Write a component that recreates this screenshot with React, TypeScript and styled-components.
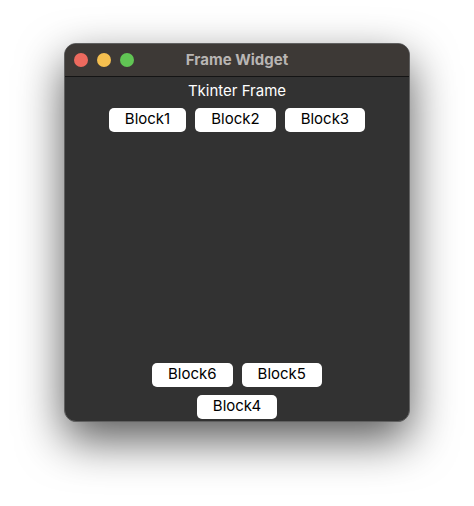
import React from 'react';
import styled, { createGlobalStyle } from 'styled-components';

const GlobalStyle = createGlobalStyle`
  * {
    box-sizing: border-box;
  }

  body {
    margin: 0;
    background: #fff;
    font-family: Inter, 'Liberation Sans', sans-serif;
  }
`;

const Desktop = styled.div`
  display: flex;
  min-height: 100vh;
  padding: 43px 64px 84px;
`;

const Window = styled.main`
  flex: 1;
  display: flex;
  flex-direction: column;
  overflow: hidden;
  background: #323232;
  border: 1px solid #606060;
  border-radius: 12px;
  box-shadow: 0 18px 46px rgba(0, 0, 0, 0.65);
`;

const TitleBar = styled.header`
  display: grid;
  grid-template-columns: 1fr auto 1fr;
  align-items: center;
  height: 33px;
  padding: 0 9px;
  background: #3d3936;
  border-bottom: 1px solid #141414;
`;

const Controls = styled.div`
  display: flex;
  gap: 9px;
`;

const ControlButton = styled.button<{ $color: string }>`
  width: 14px;
  height: 14px;
  padding: 0;
  border: none;
  border-radius: 50%;
  background: ${({ $color }) => $color};
`;

const Title = styled.h1`
  margin: 0;
  color: #b8b5b3;
  font-size: 15px;
  font-weight: 700;
  line-height: 20px;
`;

const Content = styled.div`
  flex: 1;
  display: flex;
  flex-direction: column;
  align-items: center;
  padding: 4px 0 2px;
`;

const Label = styled.p`
  margin: 0 0 7px;
  color: #fff;
  font-size: 15px;
  line-height: 20px;
`;

const ButtonRow = styled.div`
  display: flex;
  gap: 9px;
`;

const BottomFrame = styled.div`
  display: flex;
  flex-direction: column;
  align-items: center;
  gap: 8px;
  margin-top: auto;
`;

const BlockButton = styled.button`
  height: 24px;
  padding: 0 16px 2px;
  border: none;
  border-radius: 5px;
  background: #fff;
  color: #000;
  font-family: inherit;
  font-size: 15px;
  line-height: 20px;
`;

const windowControls = [
  { label: 'Close', color: '#ed6a5e' },
  { label: 'Minimize', color: '#f5bf4f' },
  { label: 'Zoom', color: '#61c554' },
];

const topBlocks = ['Block1', 'Block2', 'Block3'];
const bottomBlocks = ['Block6', 'Block5'];

const App: React.FC = () => {
  return (
    <>
      <GlobalStyle />
      <Desktop>
        <Window>
          <TitleBar>
            <Controls>
              {windowControls.map(({ label, color }) => (
                <ControlButton key={label} type="button" aria-label={label} $color={color} />
              ))}
            </Controls>
            <Title>Frame Widget</Title>
          </TitleBar>

          <Content>
            <Label>Tkinter Frame</Label>
            <ButtonRow>
              {topBlocks.map((name) => (
                <BlockButton key={name} type="button">{name}</BlockButton>
              ))}
            </ButtonRow>

            <BottomFrame>
              <ButtonRow>
                {bottomBlocks.map((name) => (
                  <BlockButton key={name} type="button">{name}</BlockButton>
                ))}
              </ButtonRow>
              <BlockButton type="button">Block4</BlockButton>
            </BottomFrame>
          </Content>
        </Window>
      </Desktop>
    </>
  );
};

export default App;
